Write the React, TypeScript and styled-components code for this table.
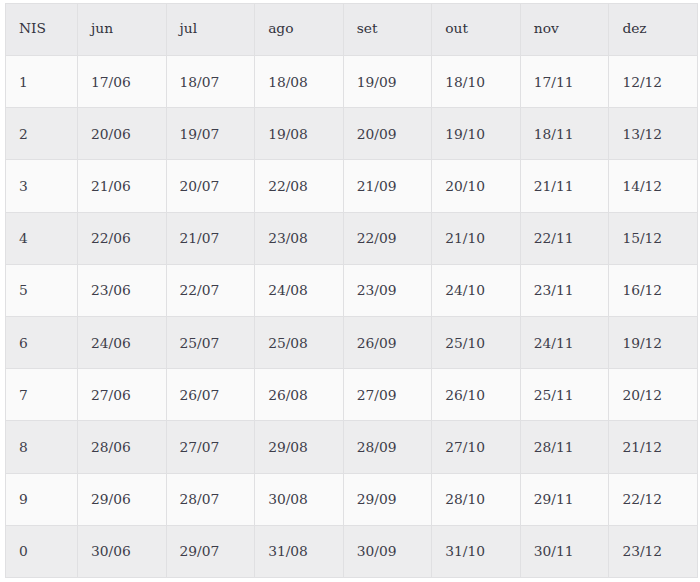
import React from "react";
import styled, { createGlobalStyle } from "styled-components";

const GlobalStyle = createGlobalStyle`
  html, body {
    margin: 0;
    padding: 0;
    background: #ffffff;
  }
`;

const Page = styled.div`
  padding: 3px 3px 0 5px;
`;

const Table = styled.table`
  width: 692px;
  border-collapse: collapse;
  table-layout: fixed;
  font-family: "DejaVu Serif", "Liberation Serif", serif;
  font-size: 13.8px;
  color: #3d3d4a;
  border: 1px solid #e2e2e4;
`;

const Col = styled.col<{ $w: number }>`
  width: ${(p) => p.$w}px;
`;

const Row = styled.tr<{ $shade: boolean }>`
  height: 52.2px;
  background: ${(p) => (p.$shade ? "#ededee" : "#fafafa")};
`;

const HeadRow = styled.tr`
  height: 52px;
  background: #ebebed;
`;

const Th = styled.th`
  text-align: left;
  font-weight: normal;
  padding: 0 13px 3px;
  border: 1px solid #e0e0e2;
  color: #33333d;
`;

const Td = styled.td`
  padding: 0 13px;
  border: 1px solid #e0e0e2;
`;

const months = ["jun", "jul", "ago", "set", "out", "nov", "dez"];

const rows: string[][] = [
  ["1", "17/06", "18/07", "18/08", "19/09", "18/10", "17/11", "12/12"],
  ["2", "20/06", "19/07", "19/08", "20/09", "19/10", "18/11", "13/12"],
  ["3", "21/06", "20/07", "22/08", "21/09", "20/10", "21/11", "14/12"],
  ["4", "22/06", "21/07", "23/08", "22/09", "21/10", "22/11", "15/12"],
  ["5", "23/06", "22/07", "24/08", "23/09", "24/10", "23/11", "16/12"],
  ["6", "24/06", "25/07", "25/08", "26/09", "25/10", "24/11", "19/12"],
  ["7", "27/06", "26/07", "26/08", "27/09", "26/10", "25/11", "20/12"],
  ["8", "28/06", "27/07", "29/08", "28/09", "27/10", "28/11", "21/12"],
  ["9", "29/06", "28/07", "30/08", "29/09", "28/10", "29/11", "22/12"],
  ["0", "30/06", "29/07", "31/08", "30/09", "31/10", "30/11", "23/12"],
];

const App: React.FC = () => {
  return (
    <>
      <GlobalStyle />
      <Page>
        <Table>
          <colgroup>
            <Col $w={72} />
            {months.map((m) => (
              <Col key={m} $w={88.57} />
            ))}
          </colgroup>
          <thead>
            <HeadRow>
              <Th>NIS</Th>
              {months.map((m) => (
                <Th key={m}>{m}</Th>
              ))}
            </HeadRow>
          </thead>
          <tbody>
            {rows.map((r, i) => (
              <Row key={r[0]} $shade={i % 2 === 1}>
                {r.map((c, j) => (
                  <Td key={j}>{c}</Td>
                ))}
              </Row>
            ))}
          </tbody>
        </Table>
      </Page>
    </>
  );
};

export default App;
